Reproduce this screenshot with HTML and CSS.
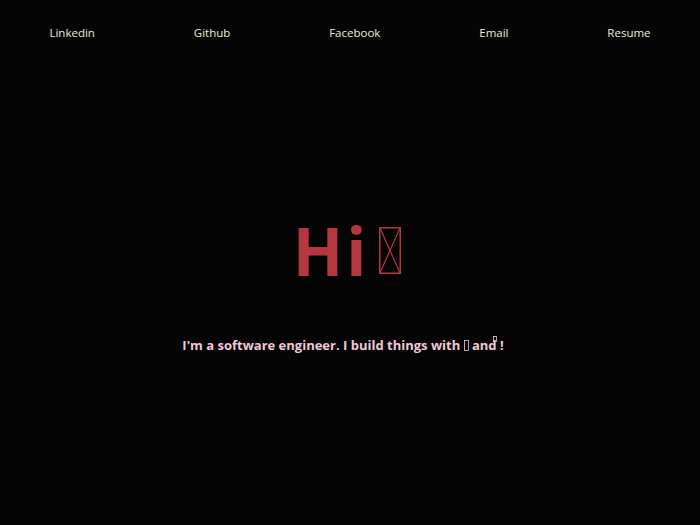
FILE: index.html
```html
<!DOCTYPE html>
<html lang="en">
<head>
<meta charset="utf-8">
<title>Hi</title>
<link rel="stylesheet" href="styles.css">
</head>
<body>
<nav class="nav">
  <a class="nav-link" href="#">Linkedin</a>
  <a class="nav-link" href="#">Github</a>
  <a class="nav-link" href="#">Facebook</a>
  <a class="nav-link" href="#">Email</a>
  <a class="nav-link" href="#">Resume</a>
</nav>
<main class="hero">
  <h1 class="title"><span class="title-word">Hi</span><svg class="tofu-big" viewBox="0 0 22 47" aria-hidden="true"><rect x="0.75" y="0.75" width="20.5" height="45.5" fill="none" stroke="#b5373f" stroke-width="1.5"/><path d="M1 1 L21 46 M21 1 L1 46" stroke="#b5373f" stroke-width="1.2" fill="none"/></svg></h1>
  <p class="subtitle">I'm a software engineer. I build things with <svg class="tofu-small" viewBox="0 0 5 11" aria-hidden="true"><rect x="0.5" y="0.5" width="4" height="10" fill="none" stroke="#f0c8d8" stroke-width="0.8"/></svg> and<svg class="tofu-up" viewBox="0 0 4 6" aria-hidden="true"><rect x="0.5" y="0.5" width="3" height="5" fill="none" stroke="#f0c8d8" stroke-width="0.8"/></svg> !</p>
</main>
</body>
</html>
```
FILE: styles.css
```css
html, body {
  margin: 0;
  padding: 0;
}
body {
  background: #050505;
  width: 700px;
  height: 525px;
  overflow: hidden;
  font-family: "Open Sans", "DejaVu Sans", sans-serif;
}
.nav {
  display: flex;
  justify-content: space-around;
  padding-top: 25px;
}
.nav-link {
  color: #eeeedd;
  text-decoration: none;
  font-size: 11.5px;
  line-height: 16px;
}
.hero {
  display: flex;
  flex-direction: column;
  align-items: center;
  padding-top: 169px;
}
.title {
  margin: 0;
  padding-right: 6px;
  color: #b5373f;
  font-size: 66px;
  font-weight: 700;
  line-height: 80px;
  display: flex;
  align-items: center;
}
.title-word {
  letter-spacing: 3px;
  margin-right: -3px;
}
.tofu-big {
  width: 22px;
  height: 47px;
  margin-left: 13px;
}
.subtitle {
  margin: 46px 0 0;
  padding-right: 14px;
  color: #f0c8d8;
  font-size: 13px;
  font-weight: 700;
  line-height: 18px;
}
.tofu-small {
  width: 5px;
  height: 11px;
  vertical-align: -1px;
}
.tofu-up {
  width: 4px;
  height: 6px;
  vertical-align: 8px;
  margin-left: -4px;
}
```
